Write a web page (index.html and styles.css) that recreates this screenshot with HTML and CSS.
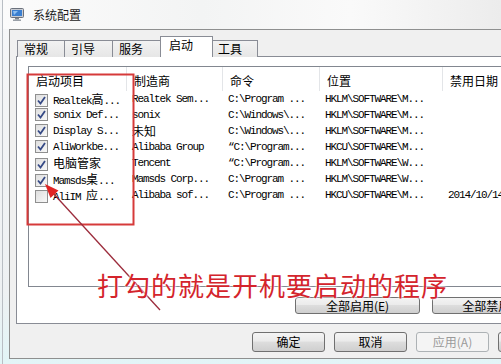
FILE: index.html
```html
<!DOCTYPE html>
<html lang="zh-CN">
<head>
    <meta charset="UTF-8">
    <title>系统配置</title>
    <link rel="stylesheet" href="styles.css">
</head>
<body>

<div class="window">
    <div class="titlebar">
        <svg class="app-icon" width="14" height="13" viewBox="0 0 14 13">
            <rect x="0.5" y="0.5" width="13" height="9" rx="1" fill="#c9ccd2" stroke="#6b717c"/>
            <rect x="2" y="2" width="10" height="6" fill="#3b7fd0"/>
            <path d="M3 3 L8 3 L4 7 Z" fill="#8fc0f0"/>
            <rect x="5" y="10" width="4" height="1.5" fill="#7d838c"/>
            <rect x="3" y="11.5" width="8" height="1.5" fill="#9aa0a8"/>
        </svg>
        <span class="title">系统配置</span>
    </div>

    <div class="client">
        <div class="tabs">
            <div class="tab">常规</div>
            <div class="tab">引导</div>
            <div class="tab">服务</div>
            <div class="tab active">启动</div>
            <div class="tab last">工具</div>
        </div>

        <div class="panel">
            <div class="list">
                <div class="list-head">
                    <div class="hcell">启动项目</div>
                    <div class="hcell">制造商</div>
                    <div class="hcell">命令</div>
                    <div class="hcell">位置</div>
                    <div class="hcell">禁用日期</div>
                </div>
                <div class="row">
                    <div class="cell first"><span class="box on"></span>Realtek<span class="cjk">高</span>...</div>
                    <div class="cell">Realtek Sem...</div>
                    <div class="cell">C:\Program ...</div>
                    <div class="cell">HKLM\SOFTWARE\M...</div>
                    <div class="cell"></div>
                </div>
                <div class="row">
                    <div class="cell first"><span class="box on"></span>sonix Def...</div>
                    <div class="cell">sonix</div>
                    <div class="cell">C:\Windows\...</div>
                    <div class="cell">HKLM\SOFTWARE\M...</div>
                    <div class="cell"></div>
                </div>
                <div class="row">
                    <div class="cell first"><span class="box on"></span>Display S...</div>
                    <div class="cell"><span class="cjk">未知</span></div>
                    <div class="cell">C:\Windows\...</div>
                    <div class="cell">HKLM\SOFTWARE\M...</div>
                    <div class="cell"></div>
                </div>
                <div class="row">
                    <div class="cell first"><span class="box on"></span>AliWorkbe...</div>
                    <div class="cell">Alibaba Group</div>
                    <div class="cell">“C:\Program...</div>
                    <div class="cell">HKCU\SOFTWARE\M...</div>
                    <div class="cell"></div>
                </div>
                <div class="row">
                    <div class="cell first"><span class="box on"></span><span class="cjk">电脑管家</span></div>
                    <div class="cell">Tencent</div>
                    <div class="cell">“C:\Program...</div>
                    <div class="cell">HKLM\SOFTWARE\W...</div>
                    <div class="cell"></div>
                </div>
                <div class="row">
                    <div class="cell first"><span class="box on"></span>Mamsds<span class="cjk">桌</span>...</div>
                    <div class="cell">Mamsds Corp...</div>
                    <div class="cell">C:\Program ...</div>
                    <div class="cell">HKLM\SOFTWARE\W...</div>
                    <div class="cell"></div>
                </div>
                <div class="row">
                    <div class="cell first"><span class="box"></span>AliIM <span class="cjk">应</span>...</div>
                    <div class="cell">Alibaba sof...</div>
                    <div class="cell">C:\Program ...</div>
                    <div class="cell">HKCU\SOFTWARE\M...</div>
                    <div class="cell">2014/10/14 ...</div>
                </div>
            </div>

            <div class="panel-buttons">
                <button class="btn wide">全部启用(<u>E</u>)</button>
                <button class="btn wide">全部禁用(<u>D</u>)</button>
            </div>
        </div>

        <div class="dialog-buttons">
            <button class="btn">确定</button>
            <button class="btn">取消</button>
            <button class="btn" disabled>应用(<u>A</u>)</button>
            <button class="btn">帮助</button>
        </div>
    </div>
</div>

<!-- 标注：红框和箭头 -->
<svg class="marks" width="501" height="364" viewBox="0 0 501 364">
    <rect x="27.5" y="74.5" width="106" height="150" fill="none" stroke="#d63a3a" stroke-width="2"/>
    <line x1="52" y1="192" x2="160" y2="310" stroke="#9c2c3c" stroke-width="1.3"/>
    <polygon points="45,184 50.5,198 58.5,190.5" fill="#e02424"/>
</svg>
<div class="note">打勾的就是开机要启动的程序</div>

</body>
</html>
```

FILE: styles.css
```css
html, body {
    margin: 0;
    padding: 0;
}
body {
    width: 501px;
    height: 364px;
    overflow: hidden;
    position: relative;
    background: linear-gradient(to bottom, #f6f7f8 0%, #eef1f3 80%, #e2f5f7 100%);
    font-family: "Noto Sans CJK SC", sans-serif;
    font-size: 12px;
    color: #000;
}
.window {
    display: flex;
    flex-direction: column;
    height: 364px;
    border-left: 1px solid #b9bec4;
    margin-left: 2px;
    box-sizing: border-box;
}
.titlebar {
    height: 29px;
    display: flex;
    align-items: center;
    padding-left: 7px;
    gap: 9px;
    background: linear-gradient(to right, #fbfbfb 0%, #f3f4f4 40%, #fafafa 70%, #ececec 100%);
}
.app-icon {
    margin-top: -1px;
}
.title {
    font-size: 12px;
    color: #1a1a1a;
    margin-top: -1px;
}
.client {
    width: 571px;
    margin-left: 6px;
    background: #f0f0f0;
    border: 1px solid #8e8f8f;
    border-right: none;
    padding: 6px 9px 5px 6px;
    box-sizing: border-box;
    height: 330px;
}
.tabs {
    display: flex;
    align-items: flex-end;
    height: 21px;
    padding-left: 1px;
}
.tab {
    box-sizing: border-box;
    width: 47px;
    height: 17px;
    line-height: 16px;
    padding-left: 6px;
    border: 1px solid #898c95;
    border-bottom: none;
    border-right: none;
    background: linear-gradient(to bottom, #f2f2f2, #e6e6e6);
    font-size: 12px;
}
.tab:nth-child(2) {
    width: 48px;
}
.tab:nth-child(3) {
    width: 49px;
}
.tab.last {
    width: 46px;
    border-right: 1px solid #898c95;
}
.tab.active {
    width: 53px;
    height: 21px;
    line-height: 16px;
    background: #fff;
    border-right: 1px solid #898c95;
    margin: 0 -1px 0 -1px;
    padding-left: 8px;
    position: relative;
    z-index: 1;
}
.tab.active + .tab {
    border-left: none;
}
.panel {
    width: 553px;
    margin-top: -1px;
    height: 268px;
    background: #fff;
    border: 1px solid #898c95;
    box-sizing: border-box;
    padding: 9px 11px 0 11px;
}
.list {
    height: 221px;
    border: 1px solid #828790;
    box-sizing: border-box;
    overflow: hidden;
}
.list-head, .row {
    display: grid;
    grid-template-columns: 98px 96px 97px 123px 120px;
}
.list-head {
    height: 24px;
}
.hcell {
    padding: 4px 0 0 7px;
    line-height: 20px;
    border-right: 1px solid #e3e5e8;
    font-size: 12px;
    white-space: nowrap;
}
.row {
    height: 16px;
    font-family: "Liberation Mono", "Noto Sans CJK SC", monospace;
    font-size: 11px;
    letter-spacing: -1.1px;
    line-height: 16px;
}
.cell {
    padding-left: 5px;
    white-space: pre;
    overflow: hidden;
}
.cell.first {
    padding-left: 6px;
}
.cjk {
    font-family: "Noto Sans CJK SC", sans-serif;
    font-size: 12px;
    letter-spacing: 0;
}
.box {
    display: inline-block;
    box-sizing: border-box;
    width: 13px;
    height: 13px;
    border: 1px solid #8f8f8f;
    background: linear-gradient(135deg, #dedede, #f8f8f8);
    margin-right: 5px;
    vertical-align: -3px;
}
.box.on {
    background:
        url("data:image/svg+xml;utf8,<svg xmlns='http://www.w3.org/2000/svg' width='11' height='11'><path d='M2 5.5 L4.5 8.5 L9 2' fill='none' stroke='%23364a86' stroke-width='1.8'/></svg>") center / 11px 11px no-repeat,
        linear-gradient(135deg, #dedede, #f8f8f8);
}
.panel-buttons {
    display: flex;
    justify-content: flex-end;
    gap: 12px;
    margin-top: 10px;
}
.dialog-buttons {
    display: flex;
    justify-content: flex-end;
    gap: 9px;
    margin-top: 8px;
}
.btn {
    font-family: "Noto Sans CJK SC", sans-serif;
    font-size: 12px;
    height: 20px;
    width: 73px;
    padding: 0;
    line-height: 16px;
    border: 1px solid #707070;
    border-radius: 3px;
    background: linear-gradient(to bottom, #f4f4f4 0%, #ebebeb 45%, #dddddd 50%, #cfcfcf 100%);
    color: #000;
}
.btn.wide {
    width: 125px;
    height: 17px;
    line-height: 13px;
}
.btn u {
    text-decoration: none;
}
.btn:disabled {
    color: #9a9a9a;
    border-color: #adb2b5;
    background: #f4f4f4;
}
.marks {
    position: absolute;
    left: 0;
    top: 0;
    pointer-events: none;
}
.note {
    position: absolute;
    left: 97px;
    top: 268px;
    font-size: 26px;
    letter-spacing: 1px;
    line-height: 34px;
    color: #d4242c;
    text-shadow: 0 0 2px #fff, 0 0 3px #fff;
    white-space: nowrap;
}
```
